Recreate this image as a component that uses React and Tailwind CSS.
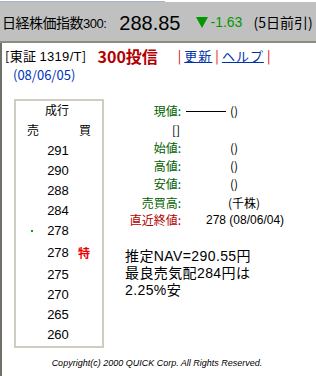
import React from 'react';

const jp = { fontFamily: '"Noto Sans CJK JP", "Liberation Sans", sans-serif' };
const latinFirst = { fontFamily: '"Liberation Sans", "Noto Sans CJK JP", sans-serif' };

const orders = [
    { price: 291 },
    { price: 290 },
    { price: 288 },
    { price: 284 },
    { price: 278, dot: true },
    { price: 278, special: true },
    { price: 275 },
    { price: 270 },
    { price: 265 },
    { price: 260 },
];

const Label = ({ children, red }) => (
    <div className={`w-[77px] text-right text-[12px] ${red ? "text-[#b00000]" : "text-[#006000]"}`}>{children}</div>
);

const App = () => {
    return (
        <div className="w-[316px] h-[376px] bg-white overflow-hidden text-black" style={jp}>
            {/* frame edge */}
            <div className="h-[2px] w-[165px] bg-white border-b border-[#a8b4cc]" />

            {/* index bar */}
            <div className="h-[41px] bg-[#c0c0c0] border-b-2 border-[#8c8c80] flex items-center pl-[2px] pt-[2px] whitespace-nowrap">
                <span className="text-[14px] tracking-[-0.5px]">日経株価指数<span className="text-[13px] font-['Liberation_Sans']">300:</span></span>
                <span className="ml-[13px] text-[20px] font-['Liberation_Sans']">288.85</span>
                <span className="ml-[16px] w-0 h-0 border-l-[6px] border-r-[6px] border-t-[11px] border-l-transparent border-r-transparent border-t-[#009900]" />
                <span className="ml-[2px] text-[14px] text-[#009900] font-['Liberation_Sans']">-1.63</span>
                <span className="ml-[11px] text-[14px] tracking-[0px]">(5日前引)</span>
            </div>

            <div className="border-l-2 border-[#707068] h-[333px] relative">
                {/* title row */}
                <div className="flex items-center h-[22px] pt-[4px] pl-[3px] whitespace-nowrap">
                    <span className="text-[13px] tracking-[0.3px]">[東証 <span className="font-['Liberation_Sans']">1319/T</span>]</span>
                    <span className="ml-[11px] text-[16px] font-bold text-[#b00000]">300投信</span>
                    <span className="ml-[20px] text-[13px] text-[#dd0000]">|</span>
                    <a className="mx-[3px] text-[13px] text-[#0033aa] underline tracking-[1px]">更新</a>
                    <span className="text-[13px] text-[#dd0000]">|</span>
                    <a className="mx-[3px] text-[13px] text-[#0033aa] underline tracking-[1px]">ヘルプ</a>
                    <span className="text-[13px] text-[#dd0000]">|</span>
                </div>
                <div className="pl-[11px] h-[20px] text-[13px] text-[#0033bb] leading-[20px]">(08/06/05)</div>

                <div className="flex mt-[14px]">
                    {/* order book */}
                    <div className="ml-[12px] w-[90px] h-[249px] border-2 border-[#d0ccc0] text-[12px]">
                        <div className="text-center h-[18px] leading-[18px] pr-[4px]">成行</div>
                        <div className="flex justify-between px-[11px] h-[22px] leading-[22px]">
                            <span>売</span><span>買</span>
                        </div>
                        {orders.map((o, i) => (
                            <div key={i} className={`relative flex items-center justify-center ${o.special ? "h-[24px]" : "h-[20px]"} font-['Liberation_Sans'] text-[13px]`}>
                                {o.dot && <span className="absolute left-[15px] w-[2px] h-[2px] bg-[#00aa00]" />}
                                <span className="pr-[2px]">{o.price}</span>
                                {o.special && <span className="absolute left-[62px] text-[#ee0000] font-bold text-[12px]" style={jp}>特</span>}
                            </div>
                        ))}
                    </div>

                    {/* quote */}
                    <div className="flex-1 text-[12px]">
                        <div className="flex items-center h-[18px] mt-[3px]">
                            <Label>現値:</Label>
                            <span className="ml-[5px] w-[40px] h-px bg-black" />
                            <span className="ml-[4px]">()</span>
                        </div>
                        <div className="flex items-center h-[19px]">
                            <div className="w-[77px] text-right pr-[1px]">[]</div>
                        </div>
                        <div className="flex items-center h-[18px]">
                            <Label>始値:</Label>
                            <span className="ml-[49px]">()</span>
                        </div>
                        <div className="flex items-center h-[18px]">
                            <Label>高値:</Label>
                            <span className="ml-[49px]">()</span>
                        </div>
                        <div className="flex items-center h-[18px]">
                            <Label>安値:</Label>
                            <span className="ml-[49px]">()</span>
                        </div>
                        <div className="flex items-center h-[19px]">
                            <Label>売買高:</Label>
                            <span className="ml-[47px]">(千株)</span>
                        </div>
                        <div className="flex items-center h-[16px]">
                            <Label red>直近終値:</Label>
                            <span className="ml-[25px] font-['Liberation_Sans']">278 (08/06/04)</span>
                        </div>
                        <div className="mt-[20px] ml-[21px] text-[14px] leading-[17px] tracking-[0.4px]" style={latinFirst}>
                            <div>推定NAV=290.55円</div>
                            <div>最良売気配284円は</div>
                            <div>2.25%安</div>
                        </div>
                    </div>
                </div>

                <div className="mt-[9px] text-center text-[9px] italic font-['Liberation_Sans'] pr-[4px]">
                    Copyright(c) 2000 QUICK Corp. All Rights Reserved.
                </div>
            </div>
        </div>
    );
};

export default App;
